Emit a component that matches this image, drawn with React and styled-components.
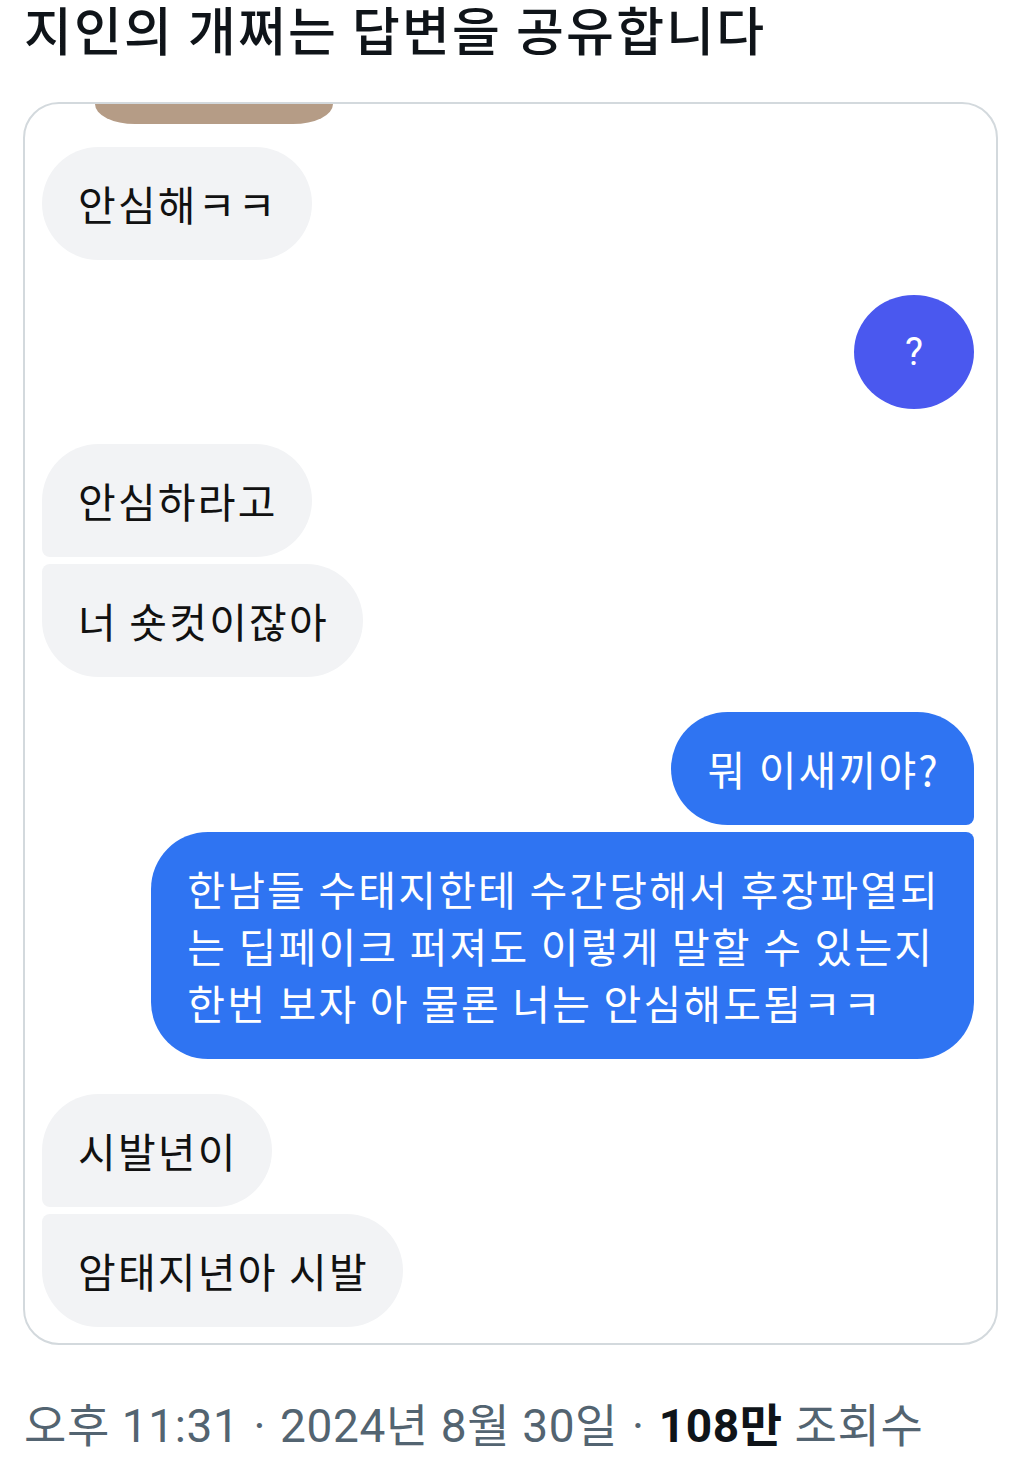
import React from "react";
import styled, { createGlobalStyle } from "styled-components";

const Global = createGlobalStyle`
  html, body { margin: 0; padding: 0; background: #ffffff; }
  body { font-family: "Noto Sans CJK KR", "Noto Sans", sans-serif; }
`;

const Page = styled.div`
  width: 1014px;
  padding: 0 16px 0 23px;
  box-sizing: border-box;
`;

const Title = styled.h1`
  margin: 0;
  padding-left: 1px;
  font-family: "Noto Sans CJK KR", sans-serif;
  font-size: 52px;
  font-weight: 500;
  line-height: 58px;
  letter-spacing: 2.2px;
  color: #0f1419;
`;

const Card = styled.div`
  margin-top: 44px;
  width: 975px;
  box-sizing: border-box;
  border: 2px solid #d3d9dd;
  border-radius: 36px;
  overflow: hidden;
  padding: 0 22px 16px 17px;
`;

const Peek = styled.div`
  margin-left: 53px;
  width: 238px;
  height: 20px;
  background: #b59c86;
  border-radius: 0 0 44px 44px / 0 0 22px 22px;
`;

const Thread = styled.div`
  display: flex;
  flex-direction: column;
  gap: 35px;
  padding-top: 23px;
`;

const Group = styled.div`
  display: flex;
  flex-direction: column;
  align-items: ${(p) => (p.$mine ? "flex-end" : "flex-start")};
  gap: 7px;
`;

const Bubble = styled.div`
  box-sizing: border-box;
  padding: 28px 34px 28px 36px;
  font-family: "Noto Sans CJK KR", sans-serif;
  font-size: 41px;
  line-height: 57px;
  letter-spacing: 2.2px;
  white-space: nowrap;
  color: ${(p) => (p.$mine ? "#ffffff" : "#111111")};
  background: ${(p) => (p.$mine ? "#2f74f2" : "#f2f3f5")};
  border-radius: ${(p) => p.$radius || "57px"};
`;

const Circle = styled.div`
  width: 120px;
  height: 114px;
  border-radius: 50%;
  background: #4a58ef;
  color: #ffffff;
  display: flex;
  align-items: center;
  justify-content: center;
  font-family: "Roboto", "Noto Sans", sans-serif;
  font-size: 38px;
  font-weight: 400;
`;

const Meta = styled.div`
  margin-top: 51px;
  padding-left: 1px;
  font-family: "Roboto", "Noto Sans CJK KR", sans-serif;
  font-size: 46px;
  line-height: 60px;
  letter-spacing: 0.6px;
  color: #536471;
  white-space: nowrap;
`;

const Strong = styled.span`
  font-weight: 700;
  color: #0f1419;
`;

const Dot = styled.span`
  margin: 0 2px;
`;

export default function App() {
  return (
    <Page>
      <Global />
      <Title>지인의 개쩌는 답변을 공유합니다</Title>
      <Card>
        <Peek />
        <Thread>
          <Group>
            <Bubble>안심해ㅋㅋ</Bubble>
          </Group>
          <Group $mine>
            <Circle>?</Circle>
          </Group>
          <Group>
            <Bubble $radius="57px 57px 57px 8px">안심하라고</Bubble>
            <Bubble $radius="8px 57px 57px 57px">너 숏컷이잖아</Bubble>
          </Group>
          <Group $mine>
            <Bubble $mine $radius="57px 57px 8px 57px">뭐 이새끼야?</Bubble>
            <Bubble $mine $radius="57px 8px 57px 57px">
              한남들 수태지한테 수간당해서 후장파열되
              <br />
              는 딥페이크 퍼져도 이렇게 말할 수 있는지
              <br />
              한번 보자 아 물론 너는 안심해도됨ㅋㅋ
            </Bubble>
          </Group>
          <Group>
            <Bubble $radius="57px 57px 57px 8px">시발년이</Bubble>
            <Bubble $radius="8px 57px 57px 57px">암태지년아 시발</Bubble>
          </Group>
        </Thread>
      </Card>
      <Meta>
        오후 11:31 <Dot>·</Dot> 2024년 8월 30일 <Dot>·</Dot> <Strong>108만</Strong> 조회수
      </Meta>
    </Page>
  );
}
